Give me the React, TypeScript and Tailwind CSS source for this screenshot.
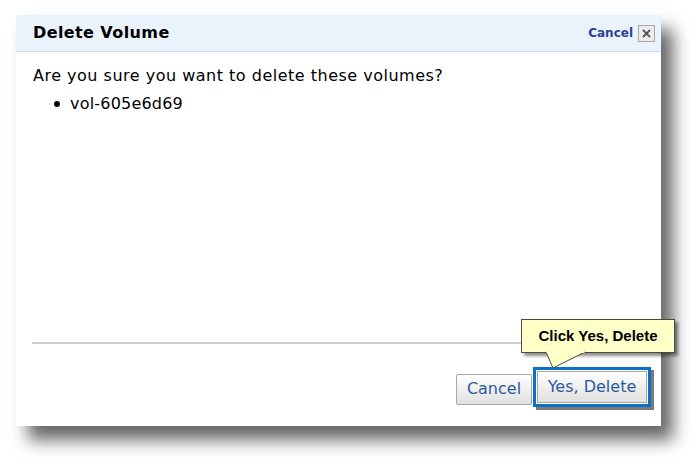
import React from 'react';

const verdana = { fontFamily: '"DejaVu Sans", Verdana, sans-serif' };

function Tooltip() {
  return (
    <div className="absolute left-[521px] top-[319px]">
      <div className="relative">
        <div className="h-[34px] w-[154px] border border-[#4a4a3a] bg-[#ffffc8] shadow-[3px_3px_3px_rgba(0,0,0,0.45)] flex items-center justify-center text-[15px] font-bold text-black [font-family:'Liberation_Sans',Arial,sans-serif]">
          Click Yes, Delete
        </div>
        <svg className="absolute left-[22px] top-[32px]" width="46" height="20" viewBox="0 0 46 20">
          <polygon points="3,1 10,17 42,1" fill="#ffffc8" stroke="#4a4a3a" strokeWidth="1" />
          <rect x="3.5" y="0" width="38" height="2" fill="#ffffc8" />
        </svg>
      </div>
    </div>
  );
}

export default function App() {
  return (
    <div className="relative w-[699px] h-[468px] bg-white pl-[16px] pt-[15px]" style={verdana}>
      <div className="w-[645px] h-[411px] bg-white flex flex-col shadow-[12px_14px_16px_rgba(0,0,0,0.6)]">
        {/* header */}
        <div className="h-[37px] bg-[#eaf2fc] border-b border-[#c5d9f0] flex items-center justify-between pl-[17px] pr-[6px]">
          <span className="text-[16px] font-bold tracking-[0.4px] text-black">Delete Volume</span>
          <div className="flex items-center gap-[5px]">
            <span className="text-[12px] font-bold text-[#2b3f95]">Cancel</span>
            <span className="w-[17px] h-[17px] border border-[#a9a9a9] bg-[#ececec] flex items-center justify-center">
              <svg width="9" height="9" viewBox="0 0 9 9">
                <path d="M1 1 L8 8 M8 1 L1 8" stroke="#555" strokeWidth="1.8" />
              </svg>
            </span>
          </div>
        </div>
        {/* body */}
        <div className="flex-1 pl-[17px] pt-[12px] text-[16px] tracking-[0.5px] text-black">
          <p>Are you sure you want to delete these volumes?</p>
          <ul className="pl-[21px] mt-[4px]">
            <li className="flex items-center gap-[10px] tracking-[0.2px]">
              <span className="w-[6px] h-[6px] rounded-full bg-black" />
              vol-605e6d69
            </li>
          </ul>
        </div>
        <div className="mx-[16px] h-[2px] bg-[#d0d0d0]" />
        {/* footer */}
        <div className="h-[82px] flex items-center justify-end pr-[10px] gap-[1px]">
          <button className="h-[31px] w-[76px] border border-[#a8a8a8] rounded-[2px] bg-gradient-to-b from-white to-[#e0e0e0] text-[16px] text-[#2c5aa0] mt-[8px]">
            Cancel
          </button>
          <div className="border-[3px] border-[#0a70c8] p-[1px] mt-[4px] shadow-[3px_3px_0_#7a7a7a]">
            <button className="h-[32px] w-[110px] border border-[#a8a8a8] bg-gradient-to-b from-white to-[#e0e0e0] text-[16px] text-[#2c5aa0]">
              Yes, Delete
            </button>
          </div>
        </div>
      </div>
      <Tooltip />
    </div>
  );
}
